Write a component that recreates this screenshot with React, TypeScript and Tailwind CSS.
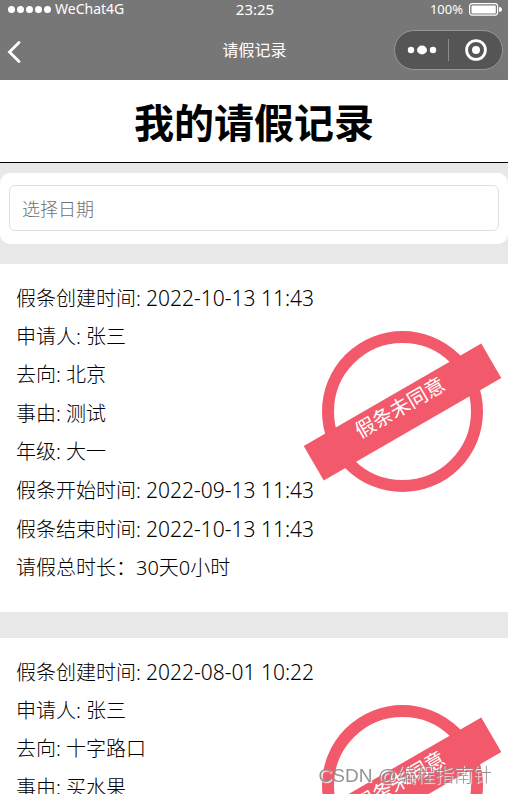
type LeaveRecord = {
  created: string;
  applicant: string;
  destination: string;
  reason: string;
  grade: string;
  start: string;
  end: string;
  duration: string;
  status: string;
};

const records: LeaveRecord[] = [
  {
    created: "2022-10-13 11:43",
    applicant: "张三",
    destination: "北京",
    reason: "测试",
    grade: "大一",
    start: "2022-09-13 11:43",
    end: "2022-10-13 11:43",
    duration: "30天0小时",
    status: "假条未同意",
  },
  {
    created: "2022-08-01 10:22",
    applicant: "张三",
    destination: "十字路口",
    reason: "买水果",
    grade: "大一",
    start: "2022-08-01 10:22",
    end: "2022-08-02 10:22",
    duration: "1天0小时",
    status: "假条未同意",
  },
];

function StatusBar() {
  return (
    <div className="grid h-[18px] grid-cols-3 items-center pr-1.5 pl-2">
      <div className="flex items-center gap-1">
        <div className="flex gap-0.5" aria-hidden="true">
          <span className="size-[7px] rounded-full bg-white" />
          <span className="size-[7px] rounded-full bg-white" />
          <span className="size-[7px] rounded-full bg-white" />
          <span className="size-[7px] rounded-full bg-white" />
          <span className="size-[7px] rounded-full bg-white" />
        </div>
        <span className="text-sm leading-[18px]">WeChat4G</span>
      </div>
      <span className="text-center text-[15px] leading-[18px]">23:25</span>
      <div className="flex items-center justify-end gap-1.5">
        <span className="text-[13px] leading-[18px]">100%</span>
        <svg width="33" height="13" viewBox="0 0 33 13" aria-hidden="true">
          <rect x="0.6" y="0.6" width="28" height="11.5" rx="2.5" fill="none" stroke="white" strokeWidth="1.2" />
          <rect x="2.5" y="2.4" width="24.3" height="8" rx="1" fill="white" />
          <path d="M30 4 Q33 4.2 33 6.4 Q33 8.6 30 8.8 Z" fill="white" />
        </svg>
      </div>
    </div>
  );
}

function NavBar() {
  return (
    <div className="grid h-[62px] grid-cols-3 items-center pt-0.5 pr-[5px] pl-1.5">
      <button type="button" aria-label="返回" className="w-4">
        <svg width="16" height="26" viewBox="0 0 16 26" className="mt-1" aria-hidden="true">
          <path d="M13 3.5 L3.5 13 L13 22.5" fill="none" stroke="white" strokeWidth="2.8" strokeLinecap="round" />
        </svg>
      </button>
      <span className="text-center text-base">请假记录</span>
      <div className="flex h-10 w-[109px] items-center justify-self-end rounded-full border border-[#979797] bg-[#555]">
        <button type="button" aria-label="更多" className="flex flex-1 justify-center">
          <svg width="30" height="10" viewBox="0 0 30 10" fill="white" aria-hidden="true">
            <circle cx="4" cy="5" r="3.2" />
            <ellipse cx="15" cy="5" rx="5" ry="4.4" />
            <circle cx="26" cy="5" r="3.2" />
          </svg>
        </button>
        <span className="h-[22px] w-px bg-[#8a8a8a]" />
        <button type="button" aria-label="关闭" className="flex flex-1 justify-center">
          <svg width="22" height="22" viewBox="0 0 22 22" aria-hidden="true">
            <circle cx="11" cy="11" r="9.4" fill="none" stroke="white" strokeWidth="2.8" />
            <circle cx="11" cy="11" r="4" fill="white" />
          </svg>
        </button>
      </div>
    </div>
  );
}

function Stamp({ text }: { text: string }) {
  return (
    <div className="absolute top-[67px] right-[25px] flex size-[161px] items-center justify-center rounded-full border-12 border-[#f2596b]">
      <div className="h-10 w-[205px] shrink-0 -rotate-30 bg-[#f2596b] text-center text-xl leading-[30px] text-white">
        {text}
      </div>
    </div>
  );
}

function RecordCard({ record }: { record: LeaveRecord }) {
  return (
    <article className="relative bg-white px-4 pt-[15px] pb-[25px]">
      <div className="grid h-77 grid-rows-8 items-center text-xl font-light">
        <p>
          假条创建时间: <time className="text-[21px]">{record.created}</time>
        </p>
        <p>申请人: {record.applicant}</p>
        <p>去向: {record.destination}</p>
        <p>事由: {record.reason}</p>
        <p>年级: {record.grade}</p>
        <p>
          假条开始时间: <time className="text-[21px]">{record.start}</time>
        </p>
        <p>
          假条结束时间: <time className="text-[21px]">{record.end}</time>
        </p>
        <p>请假总时长：{record.duration}</p>
      </div>
      <Stamp text={record.status} />
    </article>
  );
}

export default function App() {
  return (
    <div
      lang="zh-CN"
      className="flex h-screen flex-col overflow-hidden bg-[#e8e8e8] font-['Noto_Sans','Noto_Sans_CJK_SC',sans-serif] text-black"
    >
      <header className="shrink-0 bg-[#777] text-white">
        <StatusBar />
        <NavBar />
      </header>
      <main className="min-h-0 flex-1 overflow-hidden">
        <h1 className="border-b border-black bg-white pt-[5px] pb-px text-center text-[40px] leading-[76px] font-bold">
          我的请假记录
        </h1>
        <form className="mt-2.5 mb-5 rounded-[10px] bg-white px-[9px] pt-3 pb-[13px]">
          <input
            type="text"
            aria-label="选择日期"
            placeholder="选择日期"
            className="block h-[46px] w-full rounded-md border border-[#e0e0e0] px-3 pt-0.5 text-lg font-light placeholder:text-[#707070]"
          />
        </form>
        <section className="flex flex-col gap-[26px]">
          {records.map((record) => (
            <RecordCard key={record.created} record={record} />
          ))}
        </section>
      </main>
      <p className="fixed right-4 bottom-1 font-['Liberation_Sans','Noto_Sans_CJK_SC',sans-serif] text-[19px] leading-7 font-light text-[#888]/90 [text-shadow:1px_1px_1px_#fff]">
        CSDN @编程指南针
      </p>
    </div>
  );
}
